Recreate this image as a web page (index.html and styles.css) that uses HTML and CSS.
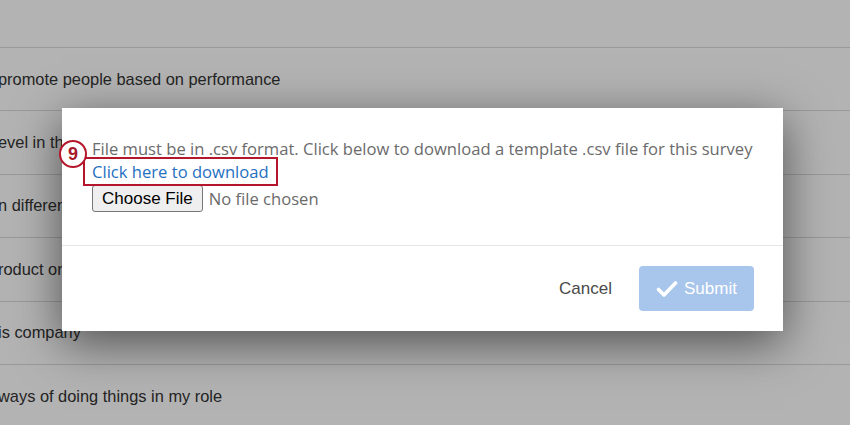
FILE: index.html
```html
<!DOCTYPE html>
<html>
<head>
<meta charset="utf-8">
<link rel="stylesheet" href="styles.css">
</head>
<body>
<div class="page">
  <div class="rows">
    <div class="row top"></div>
    <div class="row">promote people based on performance</div>
    <div class="row">evel in this organization</div>
    <div class="row">n different departments</div>
    <div class="row">roduct or service</div>
    <div class="row">is company</div>
    <div class="row">ways of doing things in my role</div>
  </div>
</div>
<div class="modal">
  <div class="modal-body">
    <div class="note">File must be in .csv format. Click below to download a template .csv file for this survey</div>
    <div class="link-line"><a class="dl" href="#">Click here to download</a></div>
    <div class="file-line">
      <span class="choose">Choose File</span>
      <span class="nofile">No file chosen</span>
    </div>
  </div>
  <div class="modal-footer">
    <span class="cancel">Cancel</span>
    <span class="submit">
      <svg class="check" width="22" height="18" viewBox="0 0 22 18"><path d="M2.5 9.5 L8 15 L19.5 3" fill="none" stroke="#fff" stroke-width="3.6" stroke-linecap="round" stroke-linejoin="round"/></svg>
      Submit
    </span>
  </div>
  <div class="badge">9</div>
</div>
</body>
</html>
```
FILE: styles.css
```css
html, body {
  margin: 0;
  padding: 0;
}
body {
  width: 850px;
  height: 425px;
  overflow: hidden;
  background: #b3b3b3;
  font-family: "Liberation Sans", Arial, Helvetica, sans-serif;
  position: relative;
}
.page {
  height: 425px;
  overflow: hidden;
}
.rows {
  margin-left: -2px;
}
.row {
  height: 62.4px;
  border-bottom: 1px solid #999999;
  display: flex;
  align-items: center;
  font-size: 16.4px;
  color: #242424;
  white-space: nowrap;
}
.row.top {
  height: 47px;
}
.modal {
  position: absolute;
  left: 62px;
  top: 108px;
  width: 721px;
  height: 223px;
  background: #ffffff;
  box-shadow: 0 12px 45px rgba(0, 0, 0, 0.55);
  display: flex;
  flex-direction: column;
}
.modal-body {
  height: 138px;
  box-sizing: border-box;
  padding: 29px 30px 0 30px;
  border-bottom: 1px solid #e6e6e6;
  font-family: "Open Sans", "Liberation Sans", Arial, sans-serif;
  font-size: 16.6px;
  line-height: 23px;
  color: #6b6b6b;
}
.note {
  white-space: nowrap;
}
.link-line {
  height: 23px;
}
.dl {
  color: #1f70c1;
  text-decoration: none;
}
.file-line {
  display: flex;
  align-items: center;
  gap: 6px;
  margin-top: 2px;
}
.choose {
  display: inline-block;
  height: 27px;
  box-sizing: border-box;
  padding: 0 9px;
  line-height: 25px;
  background: #efefef;
  border: 1px solid #767676;
  border-radius: 3px;
  color: #000;
  font-family: "Liberation Sans", Arial, sans-serif;
  font-size: 17px;
}
.nofile {
  color: #6b6b6b;
}
.modal-footer {
  flex: 1;
  display: flex;
  align-items: center;
  justify-content: flex-end;
  padding: 0 29px 0 30px;
  gap: 27px;
}
.cancel {
  font-size: 17px;
  color: #4a4a4a;
}
.submit {
  width: 115px;
  height: 45px;
  box-sizing: border-box;
  background: #a8c5eb;
  border-radius: 4px;
  color: #ffffff;
  font-size: 17px;
  display: flex;
  align-items: center;
  justify-content: center;
  gap: 6px;
}
.badge {
  position: absolute;
  left: -3px;
  top: 32px;
  width: 24px;
  height: 24px;
  border: 2.5px solid #b5162b;
  border-radius: 50%;
  background: #ffffff;
  color: #a8182b;
  font-weight: bold;
  font-size: 18px;
  line-height: 24px;
  text-align: center;
}
.link-line .dl {
  position: relative;
}
.link-line .dl::after {
  content: "";
  position: absolute;
  left: -9px;
  right: -9px;
  top: -3px;
  bottom: -3px;
  border: 2.5px solid #b5162b;
}
```
